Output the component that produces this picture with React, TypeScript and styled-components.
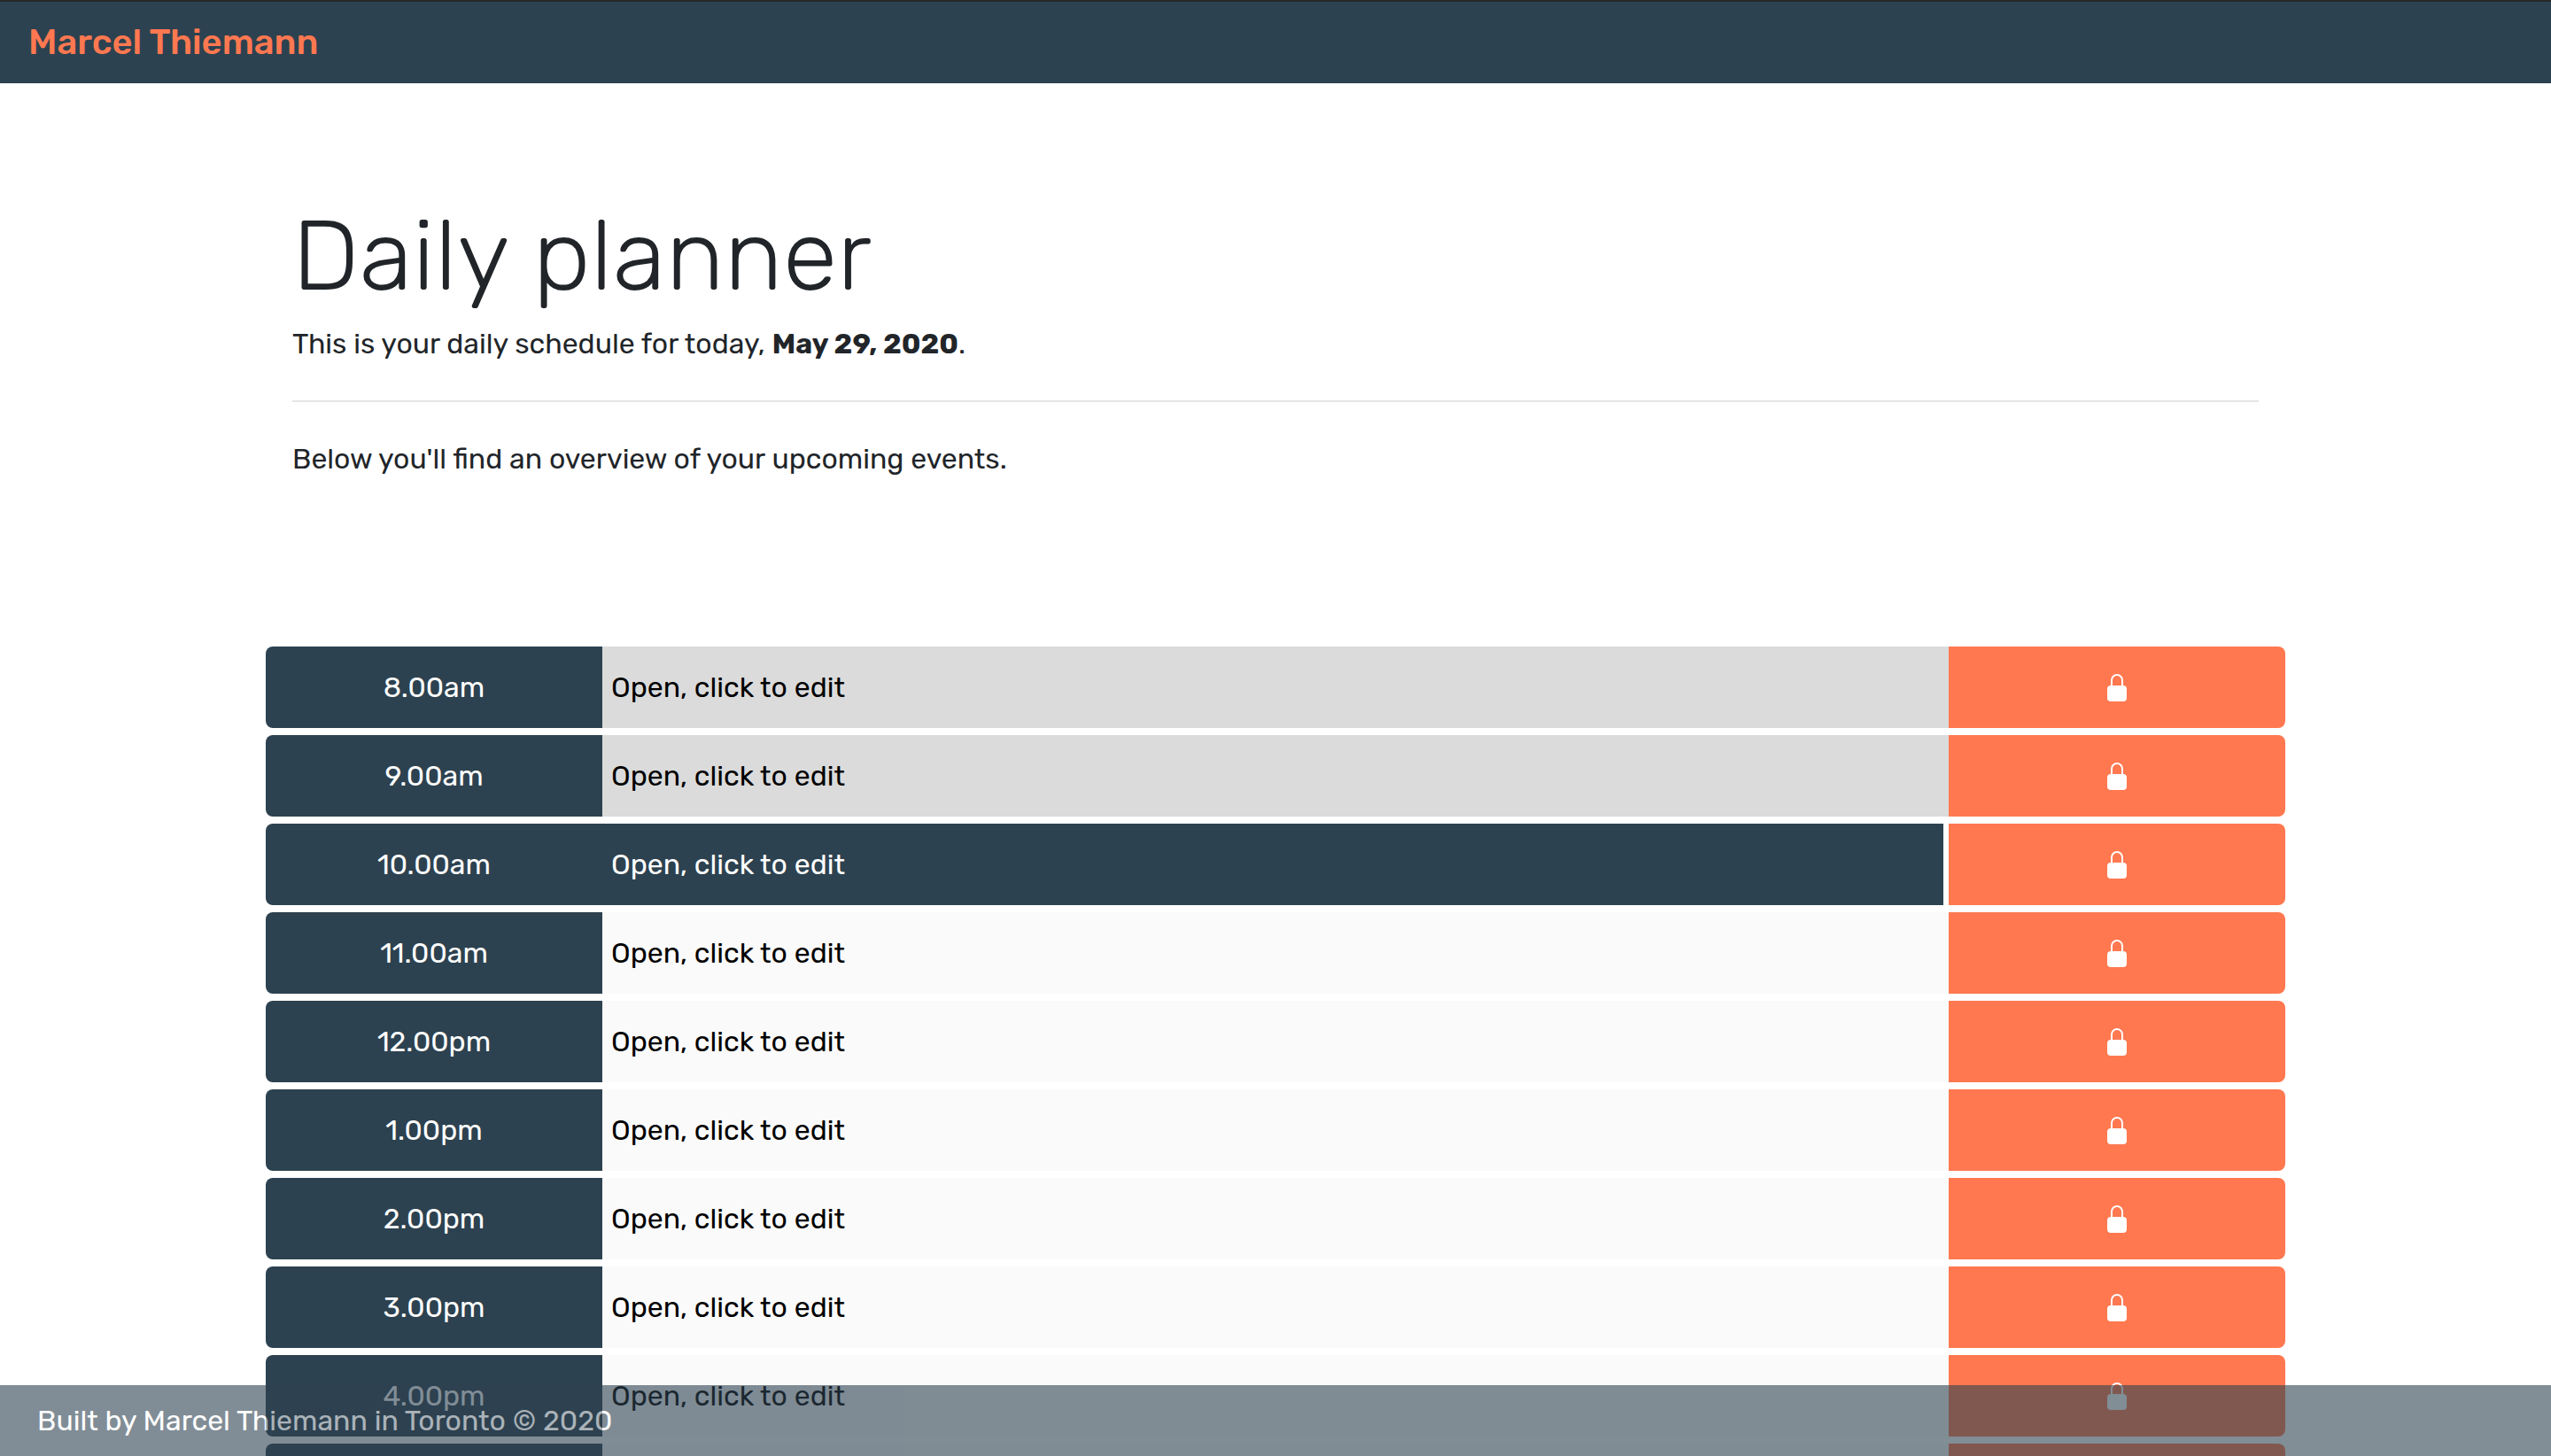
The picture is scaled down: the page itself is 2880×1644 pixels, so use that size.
import React, { useState } from "react";
import styled, { createGlobalStyle } from "styled-components";

const navy = "#2d4250";
const coral = "#ff7850";

type Phase = "past" | "present" | "future";

const phaseFill: Record<Phase, string> = {
  past: "#dbdbdb",
  present: navy,
  future: "#fafafa",
};

const GlobalStyle = createGlobalStyle`
  *, *::before, *::after { box-sizing: border-box; }
  body {
    margin: 0;
    background: #fff;
    color: #212529;
    font-family: Rubik, Roboto, "Liberation Sans", sans-serif;
    font-size: 32px;
    line-height: 48px;
  }
`;

const Page = styled.div`
  height: 100vh;
  overflow-y: auto;
  scrollbar-width: none;
`;

const NavBar = styled.nav`
  display: flex;
  align-items: center;
  padding: 16px 32px;
  border-top: 2px solid #262828;
  background: ${navy};
`;

const Brand = styled.a`
  color: ${coral};
  font-size: 40px;
  line-height: 60px;
  font-weight: 500;
  text-decoration: none;
`;

const Container = styled.div`
  width: 100%;
  max-width: 2280px;
  margin: 0 auto;
`;

const Intro = styled.header`
  padding: 128px 30px 188px;
`;

const Title = styled.h1`
  margin: 0 0 8px;
  font-size: 112px;
  line-height: 134px;
  font-weight: 300;
`;

const Lead = styled.p`
  margin: 0;
`;

const Divider = styled.hr`
  margin: 40px 0;
  border: 0;
  border-top: 2px solid #e5e5e5;
`;

const Schedule = styled.main`
  display: grid;
  gap: 8px;
  padding-bottom: 120px;
`;

const Slot = styled.form`
  display: grid;
  grid-template-columns: 2fr 8fr 2fr;
  height: 92px;
`;

const Hour = styled.label`
  display: flex;
  align-items: center;
  justify-content: center;
  border-radius: 8px 0 0 8px;
  background: ${navy};
  color: #fff;
`;

const Entry = styled.input<{ $phase: Phase }>`
  width: 100%;
  min-width: 0;
  margin: 0;
  padding: 0 10px;
  border: 0;
  border-right: 6px solid ${(p) => (p.$phase === "present" ? "#fff" : phaseFill[p.$phase])};
  border-radius: 0;
  outline: 0;
  background: ${(p) => phaseFill[p.$phase]};
  color: ${(p) => (p.$phase === "present" ? "#fff" : "#000")};
  font: inherit;
`;

const SaveButton = styled.button`
  display: flex;
  align-items: center;
  justify-content: center;
  padding: 0;
  border: 0;
  border-radius: 0 8px 8px 0;
  background: ${coral};
  color: #fff;
  cursor: pointer;
`;

const Footer = styled.footer`
  position: fixed;
  right: 0;
  bottom: 0;
  left: 0;
  padding: 16px 42px;
  background: ${navy};
  color: #fff;
  opacity: 0.6;
`;

const LockIcon = () => (
  <svg width="32" height="32" viewBox="0 0 16 16" fill="currentColor" aria-hidden="true">
    <rect width="11" height="9" x="2.5" y="7" rx="2" />
    <path fillRule="evenodd" d="M4.5 4a3.5 3.5 0 1 1 7 0v3h-1V4a2.5 2.5 0 0 0-5 0v3h-1V4z" />
  </svg>
);

const slots: { hour: string; phase: Phase }[] = [
  { hour: "8.00am", phase: "past" },
  { hour: "9.00am", phase: "past" },
  { hour: "10.00am", phase: "present" },
  { hour: "11.00am", phase: "future" },
  { hour: "12.00pm", phase: "future" },
  { hour: "1.00pm", phase: "future" },
  { hour: "2.00pm", phase: "future" },
  { hour: "3.00pm", phase: "future" },
  { hour: "4.00pm", phase: "future" },
  { hour: "5.00pm", phase: "future" },
];

const TimeBlock = ({ hour, phase }: { hour: string; phase: Phase }) => {
  const [text, setText] = useState("Open, click to edit");
  const id = `slot-${hour}`;
  return (
    <Slot onSubmit={(e) => e.preventDefault()}>
      <Hour htmlFor={id}>{hour}</Hour>
      <Entry id={id} $phase={phase} value={text} onChange={(e) => setText(e.target.value)} />
      <SaveButton type="submit" aria-label={`Save ${hour}`}>
        <LockIcon />
      </SaveButton>
    </Slot>
  );
};

export default function App() {
  return (
    <Page>
      <GlobalStyle />
      <NavBar>
        <Brand href="#">Marcel Thiemann</Brand>
      </NavBar>
      <Container>
        <Intro>
          <Title>Daily planner</Title>
          <Lead>
            This is your daily schedule for today, <strong>May 29, 2020</strong>.
          </Lead>
          <Divider />
          <Lead>Below you'll find an overview of your upcoming events.</Lead>
        </Intro>
        <Schedule>
          {slots.map((slot) => (
            <TimeBlock key={slot.hour} {...slot} />
          ))}
        </Schedule>
      </Container>
      <Footer>Built by Marcel Thiemann in Toronto © 2020</Footer>
    </Page>
  );
}
